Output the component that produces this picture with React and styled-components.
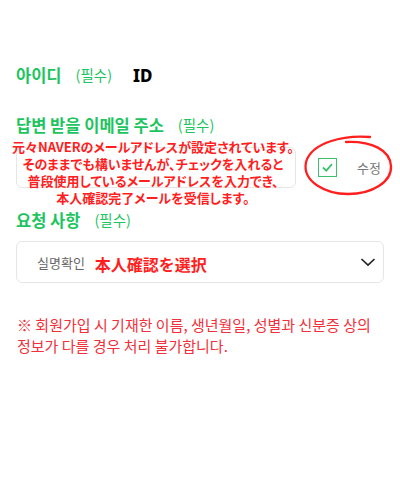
import React from "react";
import styled, { createGlobalStyle } from "styled-components";

const Global = createGlobalStyle`
  html, body { margin: 0; padding: 0; background: #fff; }
  body { font-family: "Noto Sans CJK KR", "Noto Sans", sans-serif; }
`;

const Page = styled.div`
  position: relative;
  width: 400px;
  height: 500px;
  padding: 64px 16px 0 16px;
  box-sizing: border-box;
`;

const LabelRow = styled.div`
  display: flex;
  align-items: center;
  height: 22px;
  margin-top: ${(p) => p.$mt || 0}px;
`;

const Label = styled.span`
  font-size: 16.5px;
  font-weight: 700;
  color: #1ec45f;
  line-height: 22px;
`;

const Required = styled.span`
  font-size: 14.5px;
  color: #1ec45f;
  margin-left: 14px;
  line-height: 22px;
`;

const IdValue = styled.span`
  font-family: "Noto Sans", sans-serif;
  font-size: 17px;
  font-weight: 800;
  color: #000;
  margin-left: 21px;
`;

const EmailRow = styled.div`
  display: flex;
  align-items: center;
  margin-top: 11px;
`;

const InputBox = styled.div`
  width: 280px;
  height: 41px;
  box-sizing: border-box;
  border: 1px solid #e6e6e6;
  border-radius: 6px;
`;

const Check = styled.div`
  width: 19px;
  height: 19px;
  box-sizing: border-box;
  border: 1.5px solid #3cc26e;
  margin-left: 22px;
  display: flex;
  align-items: center;
  justify-content: center;
`;

const EditText = styled.span`
  font-size: 13px;
  color: #777;
  margin-left: 20px;
`;

const Select = styled.div`
  margin-top: 10px;
  height: 42px;
  box-sizing: border-box;
  border: 1px solid #e6e6e6;
  border-radius: 6px;
  display: flex;
  align-items: center;
  padding: 0 7px 0 20px;
`;

const SelectText = styled.span`
  font-size: 13px;
  color: #666;
`;

const SelectNote = styled.span`
  font-family: "Noto Sans CJK JP", sans-serif;
  font-size: 16px;
  font-weight: 700;
  color: #ff1f1f;
  margin-left: 10px;
  margin-top: 4px;
  flex: 1;
`;

const Warning = styled.p`
  margin: 31px 0 0 0;
  font-size: 15px;
  line-height: 21px;
  color: #f0303a;
  padding-left: 1px;
`;

const Annotation = styled.div`
  position: absolute;
  left: 3px;
  top: 138px;
  width: 300px;
  text-align: center;
  font-family: "Noto Sans CJK JP", sans-serif;
  font-size: 13px;
  font-weight: 700;
  line-height: 17px;
  font-feature-settings: "palt";
  color: #ff1f1f;
`;

const Circle = styled.svg`
  position: absolute;
  left: 300px;
  top: 128px;
`;

export default function App() {
  return (
    <Page>
      <Global />
      <LabelRow>
        <Label>아이디</Label>
        <Required>(필수)</Required>
        <IdValue>ID</IdValue>
      </LabelRow>

      <LabelRow $mt={28}>
        <Label>답변 받을 이메일 주소</Label>
        <Required>(필수)</Required>
      </LabelRow>
      <EmailRow>
        <InputBox />
        <Check>
          <svg width="13" height="13" viewBox="0 0 13 13">
            <path d="M2 6.5 L5.3 9.6 L11 3.2" fill="none" stroke="#3cc26e" strokeWidth="1.8" />
          </svg>
        </Check>
        <EditText>수정</EditText>
      </EmailRow>

      <LabelRow $mt={21}>
        <Label>요청 사항</Label>
        <Required>(필수)</Required>
      </LabelRow>
      <Select>
        <SelectText>실명확인</SelectText>
        <SelectNote>本人確認を選択</SelectNote>
        <svg width="16" height="16" viewBox="0 0 16 16">
          <path d="M1.5 5 L8 11 L14.5 5" fill="none" stroke="#222" strokeWidth="1.7" />
        </svg>
      </Select>

      <Warning>
        ※ 회원가입 시 기재한 이름, 생년월일, 성별과 신분증 상의
        <br />
        정보가 다를 경우 처리 불가합니다.
      </Warning>

      <Annotation>
        元々NAVERのメールアドレスが設定されています。
        <br />
        そのままでも構いませんが、チェックを入れると
        <br />
        普段使用しているメールアドレスを入力でき、
        <br />
        本人確認完了メールを受信します。
      </Annotation>

      <Circle width="100" height="75" viewBox="0 0 100 75">
        <path
          d="M70 9 C 44 7, 12 14, 6 34 C 2 54, 26 66, 48 66 C 72 66, 92 54, 91 38 C 90 22, 72 13, 46 14"
          fill="none"
          stroke="#ff1f1f"
          strokeWidth="2.3"
          strokeLinecap="round"
        />
      </Circle>
    </Page>
  );
}
